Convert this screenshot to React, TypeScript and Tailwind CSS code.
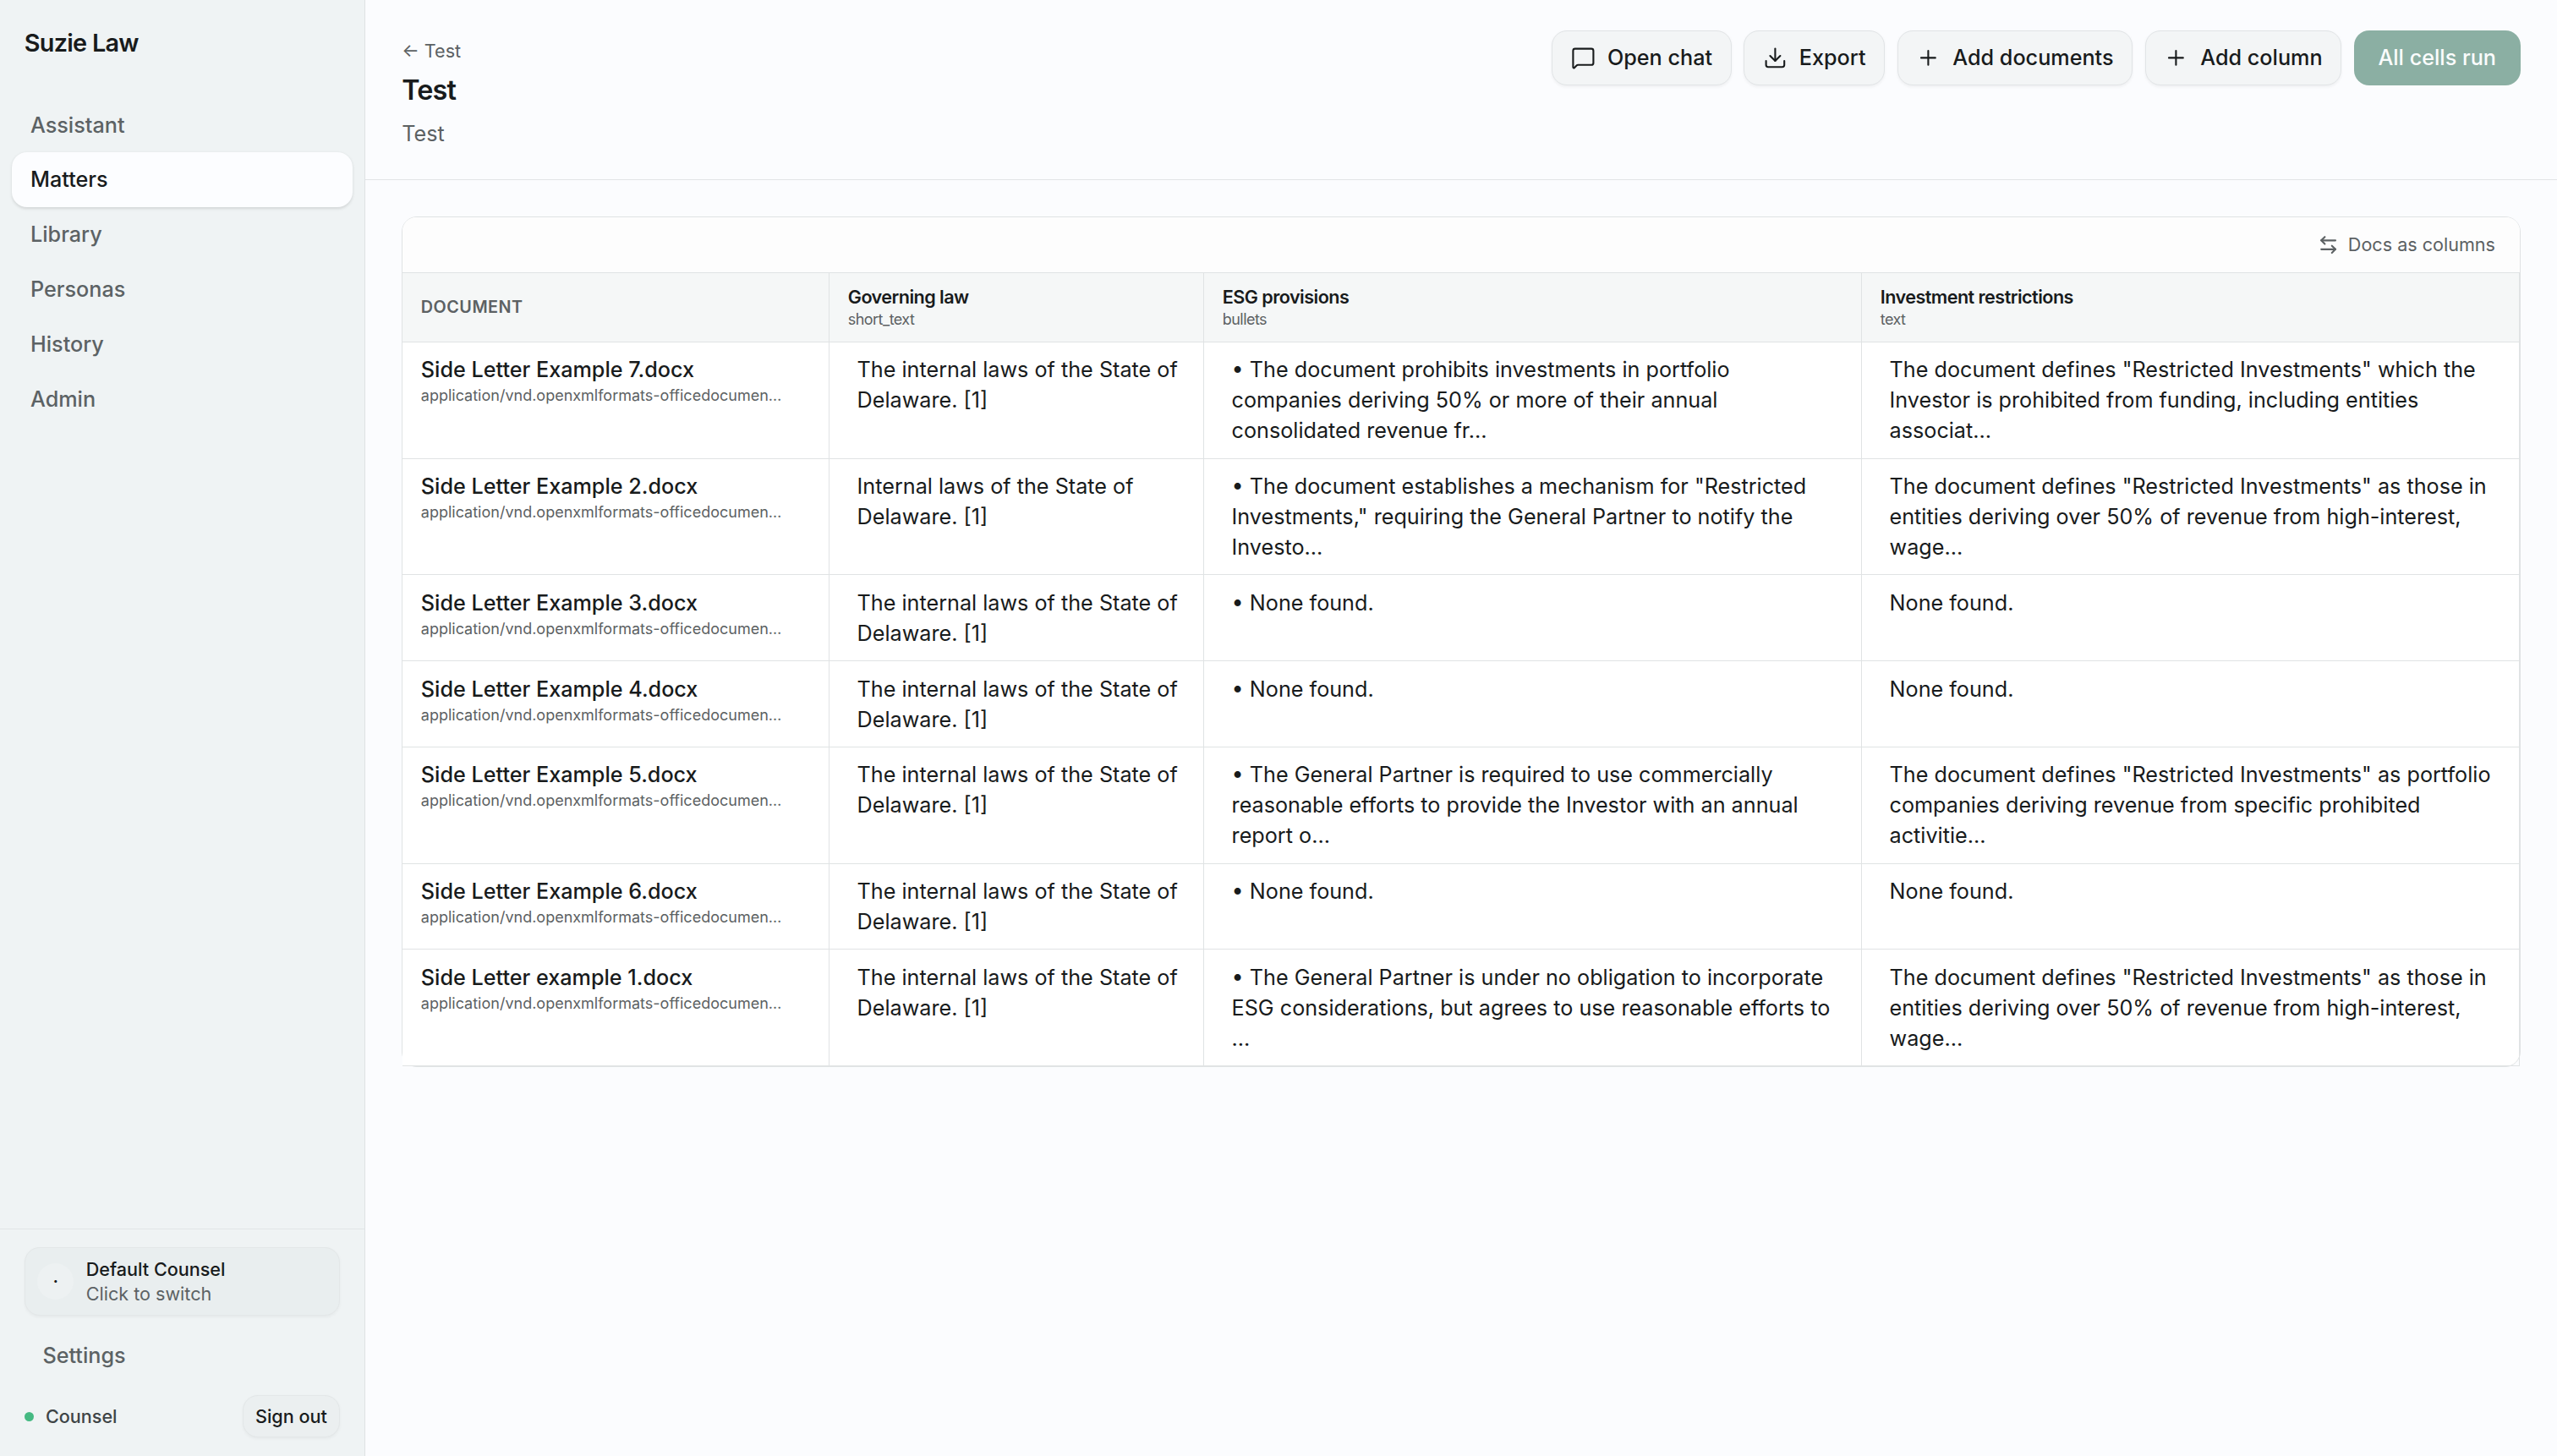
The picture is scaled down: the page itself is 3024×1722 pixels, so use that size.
import { ArrowLeftRight, Download, MessageSquare, Plus, type LucideIcon } from "lucide-react";
import type { ReactNode } from "react";

const nav = ["Assistant", "Matters", "Library", "Personas", "History", "Admin"];

const columns = [
  { name: "Governing law", type: "short_text" },
  { name: "ESG provisions", type: "bullets" },
  { name: "Investment restrictions", type: "text" },
];

const delaware = "The internal laws of the State of Delaware. [1]";

const rows: { doc: string; cells: string[] }[] = [
  {
    doc: "Side Letter Example 7.docx",
    cells: [
      delaware,
      "• The document prohibits investments in portfolio companies deriving 50% or more of their annual consolidated revenue fr…",
      'The document defines "Restricted Investments" which the Investor is prohibited from funding, including entities associat…',
    ],
  },
  {
    doc: "Side Letter Example 2.docx",
    cells: [
      "Internal laws of the State of Delaware. [1]",
      '• The document establishes a mechanism for "Restricted Investments," requiring the General Partner to notify the Investo…',
      'The document defines "Restricted Investments" as those in entities deriving over 50% of revenue from high-interest, wage…',
    ],
  },
  { doc: "Side Letter Example 3.docx", cells: [delaware, "• None found.", "None found."] },
  { doc: "Side Letter Example 4.docx", cells: [delaware, "• None found.", "None found."] },
  {
    doc: "Side Letter Example 5.docx",
    cells: [
      delaware,
      "• The General Partner is required to use commercially reasonable efforts to provide the Investor with an annual report o…",
      'The document defines "Restricted Investments" as portfolio companies deriving revenue from specific prohibited activitie…',
    ],
  },
  { doc: "Side Letter Example 6.docx", cells: [delaware, "• None found.", "None found."] },
  {
    doc: "Side Letter example 1.docx",
    cells: [
      delaware,
      "• The General Partner is under no obligation to incorporate ESG considerations, but agrees to use reasonable efforts to …",
      'The document defines "Restricted Investments" as those in entities deriving over 50% of revenue from high-interest, wage…',
    ],
  },
];

function ActionButton({ icon: Icon, children }: { icon: LucideIcon; children: ReactNode }) {
  return (
    <button className="flex h-9 items-center gap-2 rounded-[10px] border border-[#e1e4e6] bg-[#f3f5f6] px-3 text-sm font-medium text-[#181b1c] shadow-[0_1px_2px_rgba(0,0,0,0.05)]">
      <Icon className="size-4" strokeWidth={1.75} />
      {children}
    </button>
  );
}

function Sidebar() {
  return (
    <aside className="flex w-60 shrink-0 flex-col border-r border-[#dee2e4] bg-[#eff3f4]">
      <div className="flex h-14 items-center px-4 text-base font-semibold tracking-tight">Suzie Law</div>
      <nav className="flex flex-1 flex-col p-2">
        {nav.map((item) => (
          <a
            key={item}
            className={
              item === "Matters"
                ? "flex h-9 items-center rounded-[10px] bg-[#fcfdff] px-3 text-sm font-medium text-[#181b1c] shadow-[0_1px_2px_rgba(0,0,0,0.12)]"
                : "flex h-9 items-center rounded-[10px] px-3 text-sm font-medium text-[#5c6264]"
            }
          >
            {item}
          </a>
        ))}
      </nav>
      <div className="flex flex-col gap-2 border-t border-[#e1e5e6] px-4 py-3">
        <button className="flex items-center gap-2 rounded-[10px] border border-[#e3e7e8] bg-[#e9eeef] px-2 py-1.5 text-left text-xs shadow-[0_1px_2px_rgba(0,0,0,0.04)]">
          <span className="flex size-6 items-center justify-center rounded-full bg-[#edf1f2] text-xs font-medium">·</span>
          <span className="flex flex-col">
            <span className="font-medium">Default Counsel</span>
            <span className="text-[#5c6264]">Click to switch</span>
          </span>
        </button>
        <a className="flex h-9 items-center px-3 text-sm font-medium text-[#5c6264]">Settings</a>
        <div className="flex items-center justify-between text-xs font-medium">
          <span className="flex items-center gap-2 text-[#3e4446]">
            <span className="size-1.5 rounded-full bg-[#45b982]" />
            Counsel
          </span>
          <button className="flex h-7 items-center rounded-[10px] border border-[#e3e7e8] bg-[#ebeff0] px-2 shadow-[0_1px_2px_rgba(0,0,0,0.04)]">
            Sign out
          </button>
        </div>
      </div>
    </aside>
  );
}

export default function App() {
  return (
    <div className="flex h-[956.67px] w-[1680px] overflow-hidden bg-[#fbfcfe] font-[Inter,sans-serif] text-[#181b1c] antialiased [zoom:1.8]">
      <Sidebar />
      <main className="flex min-w-0 flex-1 flex-col">
        <header className="flex items-start justify-between border-b border-[#e1e4e6] px-6 py-5">
          <div>
            <div className="h-6 text-base leading-6">
              <a className="text-xs leading-none text-[#5c6163]">← Test</a>
            </div>
            <h1 className="text-lg leading-[31px] font-semibold tracking-tight">Test</h1>
            <p className="mt-[3px] text-sm text-[#5c6163]">Test</p>
          </div>
          <div className="flex gap-2">
            <ActionButton icon={MessageSquare}>Open chat</ActionButton>
            <ActionButton icon={Download}>Export</ActionButton>
            <ActionButton icon={Plus}>Add documents</ActionButton>
            <ActionButton icon={Plus}>Add column</ActionButton>
            <button className="flex h-9 items-center rounded-[10px] bg-[#8bafa3] px-4 text-sm font-medium text-[#fafcfc]">
              All cells run
            </button>
          </div>
        </header>
        <div className="px-6 pt-[23.7px]">
          <div className="rounded-[10px] border border-[#e0e3e4] bg-white">
            <div className="flex justify-end rounded-t-[9px] border-b border-[#e0e3e4] bg-[#fdfdfd] px-4 py-2">
              <button className="flex h-5 items-center gap-1.5 text-xs text-[#5c6163]">
                <ArrowLeftRight className="size-3.5" />
                Docs as columns
              </button>
            </div>
            <table className="w-full table-fixed border-separate border-spacing-0 text-sm">
              <colgroup>
                <col className="w-[280.56px]" />
                <col className="w-[246.11px]" />
                <col className="w-[432.22px]" />
                <col />
              </colgroup>
              <thead className="bg-[#f5f7f7] text-left">
                <tr>
                  <th className="border-r border-b border-[#e0e3e4] px-3 py-2 text-[11px] font-semibold tracking-wide text-[#5c6163] uppercase">
                    Document
                  </th>
                  {columns.map((c) => (
                    <th key={c.name} className="border-r border-b border-[#e0e3e4] px-3 py-2 text-xs font-semibold tracking-tight">
                      <div>{c.name}</div>
                      <div className="text-[10px] leading-[13px] font-normal text-[#5c6163]">{c.type}</div>
                    </th>
                  ))}
                </tr>
              </thead>
              <tbody>
                {rows.map((r) => (
                  <tr key={r.doc} className="align-top">
                    <td className="border-r border-b border-[#e0e3e4] bg-white px-3 py-2">
                      <div className="font-medium">{r.doc}</div>
                      <div className="text-[10px] text-[#5c6163]">application/vnd.openxmlformats-officedocumen…</div>
                    </td>
                    {r.cells.map((text, i) => (
                      <td key={i} className="border-r border-b border-[#e0e3e4] py-2 pr-3.5 pl-[18px]">
                        {text}
                      </td>
                    ))}
                  </tr>
                ))}
              </tbody>
            </table>
          </div>
        </div>
      </main>
    </div>
  );
}
